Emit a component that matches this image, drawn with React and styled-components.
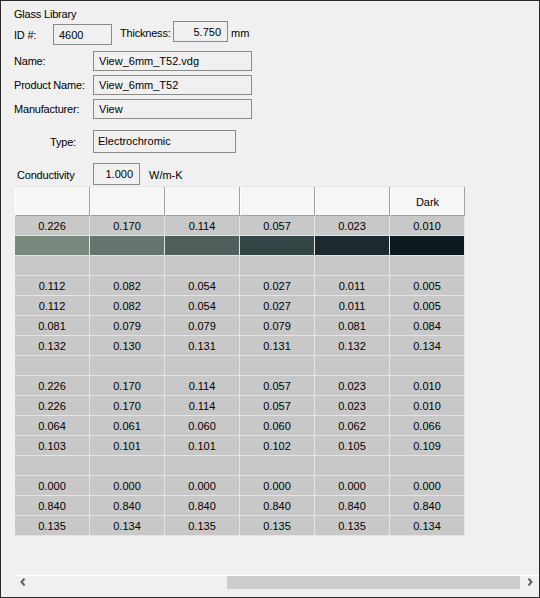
import React from 'react';
import styled, { createGlobalStyle } from 'styled-components';

const GlobalStyle = createGlobalStyle`
  html, body {
    margin: 0;
    padding: 0;
    background: #f0f0f0;
  }
  * {
    box-sizing: border-box;
  }
`;

const swatches = ['#7a897d', '#66756f', '#515f5c', '#344545', '#1c2a2f', '#0c1a1f'];

// 한 행에 6개 값, null은 빈 행, 'swatch'는 색상 행
const rows = [
  ['0.226', '0.170', '0.114', '0.057', '0.023', '0.010'],
  'swatch',
  null,
  ['0.112', '0.082', '0.054', '0.027', '0.011', '0.005'],
  ['0.112', '0.082', '0.054', '0.027', '0.011', '0.005'],
  ['0.081', '0.079', '0.079', '0.079', '0.081', '0.084'],
  ['0.132', '0.130', '0.131', '0.131', '0.132', '0.134'],
  null,
  ['0.226', '0.170', '0.114', '0.057', '0.023', '0.010'],
  ['0.226', '0.170', '0.114', '0.057', '0.023', '0.010'],
  ['0.064', '0.061', '0.060', '0.060', '0.062', '0.066'],
  ['0.103', '0.101', '0.101', '0.102', '0.105', '0.109'],
  null,
  ['0.000', '0.000', '0.000', '0.000', '0.000', '0.000'],
  ['0.840', '0.840', '0.840', '0.840', '0.840', '0.840'],
  ['0.135', '0.134', '0.135', '0.135', '0.135', '0.134'],
];

const headers = ['', '', '', '', '', 'Dark'];

const App = () => {
  return (
    <>
      <GlobalStyle />
      <Window>
        <Form>
          <Title>Glass Library</Title>
          <Row $top={0} $h={24}>
            <Label $w={39} $mt={8}>ID #:</Label>
            <Box $w={59} $h={21} $mt={3}>4600</Box>
            <Label $w={53} $mt={6} $ml={8}>Thickness:</Label>
            <Box $w={55} $h={21} $right>5.750</Box>
            <Unit $mt={6} $ml={3}>mm</Unit>
          </Row>
          <Row $top={6} $h={20}>
            <Label $w={79} $mt={4}>Name:</Label>
            <Box $w={159} $h={20}>View_6mm_T52.vdg</Box>
          </Row>
          <Row $top={4} $h={20}>
            <Label $w={79} $mt={4}>Product Name:</Label>
            <Box $w={159} $h={20}>View_6mm_T52</Box>
          </Row>
          <Row $top={4} $h={20}>
            <Label $w={79} $mt={4}>Manufacturer:</Label>
            <Box $w={159} $h={20}>View</Box>
          </Row>
          <Row $top={11} $h={23}>
            <Label $w={79} $mt={6} $pl={36}>Type:</Label>
            <Box $w={143} $h={23} $top>Electrochromic</Box>
          </Row>
          <Row $top={10} $h={22}>
            <Label $w={79} $mt={6} $pl={3}>Conductivity</Label>
            <Box $w={47} $h={22} $right>1.000</Box>
            <Unit $mt={6} $ml={9}>W/m-K</Unit>
          </Row>
        </Form>

        <Table>
          <HeaderRow>
            {headers.map((h, i) => (
              <HeaderCell key={i}>{h}</HeaderCell>
            ))}
          </HeaderRow>
          {rows.map((r, i) => (
            <DataRow key={i}>
              {r === 'swatch'
                ? swatches.map((c, j) => <Swatch key={j} $color={c} />)
                : [0, 1, 2, 3, 4, 5].map((j) => (
                    <Cell key={j}>{r ? r[j] : ''}</Cell>
                  ))}
            </DataRow>
          ))}
        </Table>

        <ScrollBar>
          <Arrow viewBox="0 0 6 8">
            <path d="M4.5 0.5 L1.5 4 L4.5 7.5" />
          </Arrow>
          <Track>
            <Thumb />
          </Track>
          <Arrow viewBox="0 0 6 8">
            <path d="M1.5 0.5 L4.5 4 L1.5 7.5" />
          </Arrow>
        </ScrollBar>
      </Window>
    </>
  );
};

const Window = styled.div`
  width: 540px;
  height: 598px;
  border: 1px solid #2a2a2a;
  background: #f0f0f0;
  font-family: 'Liberation Sans', Arial, sans-serif;
  font-size: 11px;
  color: #000;
  display: flex;
  flex-direction: column;
  overflow: hidden;
`;

const Form = styled.div`
  padding-left: 13px;
  display: flex;
  flex-direction: column;
`;

const Title = styled.div`
  margin-top: 7px;
  height: 13px;
  line-height: 13px;
  letter-spacing: -0.2px;
`;

const Row = styled.div`
  display: flex;
  align-items: flex-start;
  margin-top: ${(p) => p.$top}px;
  height: ${(p) => p.$h}px;
`;

const Label = styled.div`
  width: ${(p) => p.$w}px;
  margin-top: ${(p) => p.$mt || 0}px;
  margin-left: ${(p) => p.$ml || 0}px;
  padding-left: ${(p) => p.$pl || 0}px;
  line-height: 13px;
  letter-spacing: -0.2px;
  white-space: nowrap;
`;

const Unit = styled.div`
  margin-top: ${(p) => p.$mt || 0}px;
  margin-left: ${(p) => p.$ml || 0}px;
  line-height: 13px;
`;

const Box = styled.div`
  width: ${(p) => p.$w}px;
  height: ${(p) => p.$h}px;
  margin-top: ${(p) => p.$mt || 0}px;
  border: 1px solid #8a8a8a;
  background: #f0f0f0;
  display: flex;
  align-items: ${(p) => (p.$top ? 'flex-start' : 'center')};
  justify-content: ${(p) => (p.$right ? 'flex-end' : 'flex-start')};
  padding: ${(p) => (p.$top ? '4px 4px 0 4px' : '1px 6px 0 5px')};
  line-height: 13px;
  white-space: nowrap;
`;

const Table = styled.div`
  margin-top: 1px;
  margin-left: 14px;
  width: 450px;
  display: flex;
  flex-direction: column;
`;

const HeaderRow = styled.div`
  display: flex;
  height: 30px;
  background: #f6f6f6;
  border-top: 1px solid #e8e8e8;
`;

const HeaderCell = styled.div`
  width: 75px;
  height: 29px;
  border-left: 1px solid #ffffff;
  border-right: 1px solid #a0a0a0;
  border-bottom: 1px solid #a0a0a0;
  display: flex;
  align-items: center;
  justify-content: center;
  padding-top: 1px;
`;

const DataRow = styled.div`
  display: flex;
  height: 20px;
`;

const Cell = styled.div`
  width: 75px;
  height: 20px;
  background: #c8c8c8;
  border-right: 1px solid #e4e4e4;
  border-bottom: 1px solid #e4e4e4;
  display: flex;
  align-items: center;
  justify-content: center;
  padding-top: 1px;
  line-height: 13px;
`;

const Swatch = styled.div`
  width: 75px;
  height: 20px;
  background: ${(p) => p.$color};
  border-right: 1px solid #e4e4e4;
  border-bottom: 1px solid #e4e4e4;
`;

const ScrollBar = styled.div`
  margin-top: auto;
  margin-bottom: 8px;
  margin-left: 14px;
  width: 523px;
  height: 14px;
  border-top: 1px solid #ffffff;
  display: flex;
  align-items: center;
  padding: 0 0 1px 0;
`;

const Arrow = styled.svg`
  width: 16px;
  height: 8px;
  flex-shrink: 0;
  padding: 0 5px;
  fill: none;
  stroke: #606060;
  stroke-width: 2;
`;

const Track = styled.div`
  flex: 1;
  height: 13px;
  position: relative;
`;

const Thumb = styled.div`
  position: absolute;
  top: 0;
  bottom: 0;
  left: 196px;
  right: 2px;
  background: #cdcdcd;
`;

export default App;
